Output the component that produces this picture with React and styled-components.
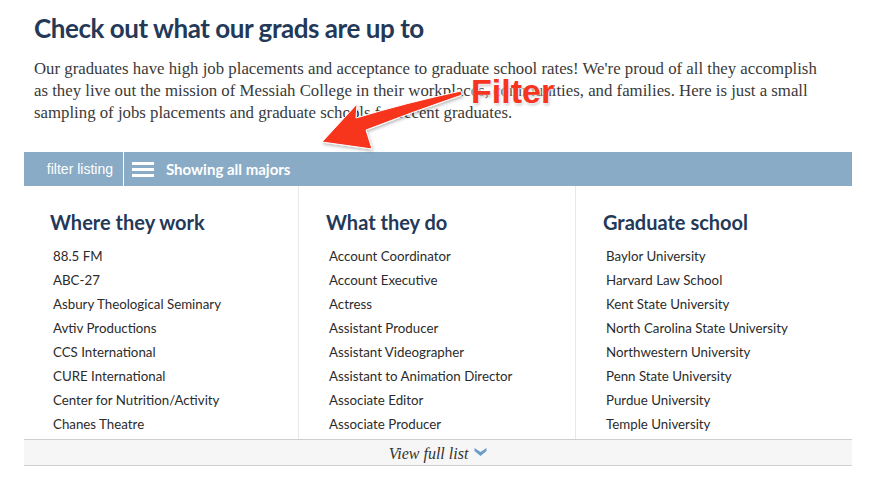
import * as React from 'react'
import styled, { createGlobalStyle } from 'styled-components'

const GlobalStyle = createGlobalStyle`
  html, body {
    margin: 0;
    padding: 0;
    background: #fff;
  }
  body {
    font-family: Lato, "Open Sans", sans-serif;
    color: #333;
  }
`

const Page = styled.div`
  position: relative;
  width: 871px;
  height: 480px;
  overflow: hidden;
`

const Section = styled.section`
  width: 828px;
  margin-left: 24px;
`

const Intro = styled.div`
  padding: 12px 10px 0 10px;
`

const Heading = styled.h1`
  margin: 0;
  font-family: Lato, sans-serif;
  font-weight: 700;
  font-size: 26px;
  line-height: 32px;
  color: #243858;
  letter-spacing: -0.45px;
`

const Lead = styled.p`
  margin: 14px 0 0 0;
  font-family: "Liberation Serif", serif;
  font-size: 16.8px;
  line-height: 22px;
  color: #3a3a3a;
  white-space: nowrap;
`

const FilterBar = styled.div`
  display: flex;
  align-items: center;
  height: 34px;
  margin-top: 28px;
  background: #8aabc5;
  color: #fff;
`

const FilterLabel = styled.div`
  display: flex;
  align-items: center;
  justify-content: flex-end;
  width: 89px;
  height: 100%;
  padding-right: 10px;
  border-right: 1px solid #fff;
  font-family: "Liberation Sans", Arial, sans-serif;
  font-size: 14px;
`

const Burger = styled.span`
  display: flex;
  flex-direction: column;
  gap: 3px;
  margin: 0 12px 0 8px;

  span {
    display: block;
    width: 22px;
    height: 3px;
    background: #fff;
  }
`

const Showing = styled.div`
  font-family: Lato, sans-serif;
  font-weight: 700;
  font-size: 15px;
`

const Columns = styled.div`
  display: grid;
  grid-template-columns: 274px 277px 277px;
  height: 253px;
  overflow: hidden;
`

const Column = styled.div`
  padding: 22px 0 0 ${p => (p.$first ? '26px' : '27px')};
  border-left: ${p => (p.$first ? 'none' : '1px solid #e8e8e8')};
`

const ColumnTitle = styled.h2`
  margin: 0 0 8px 0;
  font-family: Lato, sans-serif;
  font-weight: 700;
  font-size: 20px;
  line-height: 28px;
  color: #243858;
`

const List = styled.ul`
  margin: 0;
  padding: 0 0 0 3px;
  list-style: none;
`

const Item = styled.li`
  font-family: Lato, sans-serif;
  font-size: 13.3px;
  line-height: 24px;
  color: #2b2b2b;
`

const More = styled.div`
  display: flex;
  align-items: center;
  justify-content: center;
  gap: 6px;
  height: 22px;
  padding-top: 3px;
  background: #f6f6f6;
  border-top: 1px solid #cfcfcf;
  border-bottom: 1px solid #cfcfcf;
  font-family: "Liberation Serif", serif;
  font-style: italic;
  font-size: 16px;
  color: #333;

  svg {
    margin-top: -4px;
  }
`

const Annotation = styled.div`
  position: absolute;
  left: 0;
  top: 0;
  width: 871px;
  height: 480px;
  pointer-events: none;
`

const FilterNote = styled.div`
  position: absolute;
  left: 471px;
  top: 72px;
  font-family: "Liberation Sans", Arial, sans-serif;
  font-weight: 700;
  font-size: 34px;
  line-height: 38px;
  color: #f6341f;
  text-shadow: 0 0 3px #fff, 0 0 3px #fff, 1px 2px 3px rgba(0, 0, 0, 0.25);
`

const columns = [
  {
    title: 'Where they work',
    items: [
      '88.5 FM',
      'ABC-27',
      'Asbury Theological Seminary',
      'Avtiv Productions',
      'CCS International',
      'CURE International',
      'Center for Nutrition/Activity',
      'Chanes Theatre'
    ]
  },
  {
    title: 'What they do',
    items: [
      'Account Coordinator',
      'Account Executive',
      'Actress',
      'Assistant Producer',
      'Assistant Videographer',
      'Assistant to Animation Director',
      'Associate Editor',
      'Associate Producer'
    ]
  },
  {
    title: 'Graduate school',
    items: [
      'Baylor University',
      'Harvard Law School',
      'Kent State University',
      'North Carolina State University',
      'Northwestern University',
      'Penn State University',
      'Purdue University',
      'Temple University'
    ]
  }
]

export default function App() {
  return (
    <Page>
      <GlobalStyle />
      <Section>
        <Intro>
          <Heading>Check out what our grads are up to</Heading>
          <Lead>
            Our graduates have high job placements and acceptance to graduate school rates! We're proud of all they accomplish
            <br />
            as they live out the mission of Messiah College in their workplaces, communities, and families. Here is just a small
            <br />
            sampling of jobs placements and graduate schools for recent graduates.
          </Lead>
        </Intro>

        <FilterBar>
          <FilterLabel>filter listing</FilterLabel>
          <Burger>
            <span />
            <span />
            <span />
          </Burger>
          <Showing>Showing all majors</Showing>
        </FilterBar>

        <Columns>
          {columns.map((col, i) => (
            <Column key={col.title} $first={i === 0}>
              <ColumnTitle>{col.title}</ColumnTitle>
              <List>
                {col.items.map(item => (
                  <Item key={item}>{item}</Item>
                ))}
              </List>
            </Column>
          ))}
        </Columns>

        <More>
          View full list
          <svg width="13" height="10" viewBox="0 0 13 10">
            <path d="M0.5 1 L6.5 5 L12.5 1 L12.5 4 L6.5 9 L0.5 4 Z" fill="#6b9cc6" />
          </svg>
        </More>
      </Section>

      <Annotation>
        <svg width="871" height="480" viewBox="0 0 871 480">
          <defs>
            <filter id="arrowShadow" x="-20%" y="-20%" width="140%" height="140%">
              <feDropShadow dx="1" dy="2" stdDeviation="1.5" floodColor="#000" floodOpacity="0.25" />
            </filter>
          </defs>
          <path
            d="M322 142 L357 104 L356 118 Q405 103 461 91 L462 95 Q412 112 366 130 L372 149 Z"
            fill="#f6341f"
            stroke="#fff"
            strokeWidth="1"
            filter="url(#arrowShadow)"
          />
        </svg>
        <FilterNote>Filter</FilterNote>
      </Annotation>
    </Page>
  )
}
